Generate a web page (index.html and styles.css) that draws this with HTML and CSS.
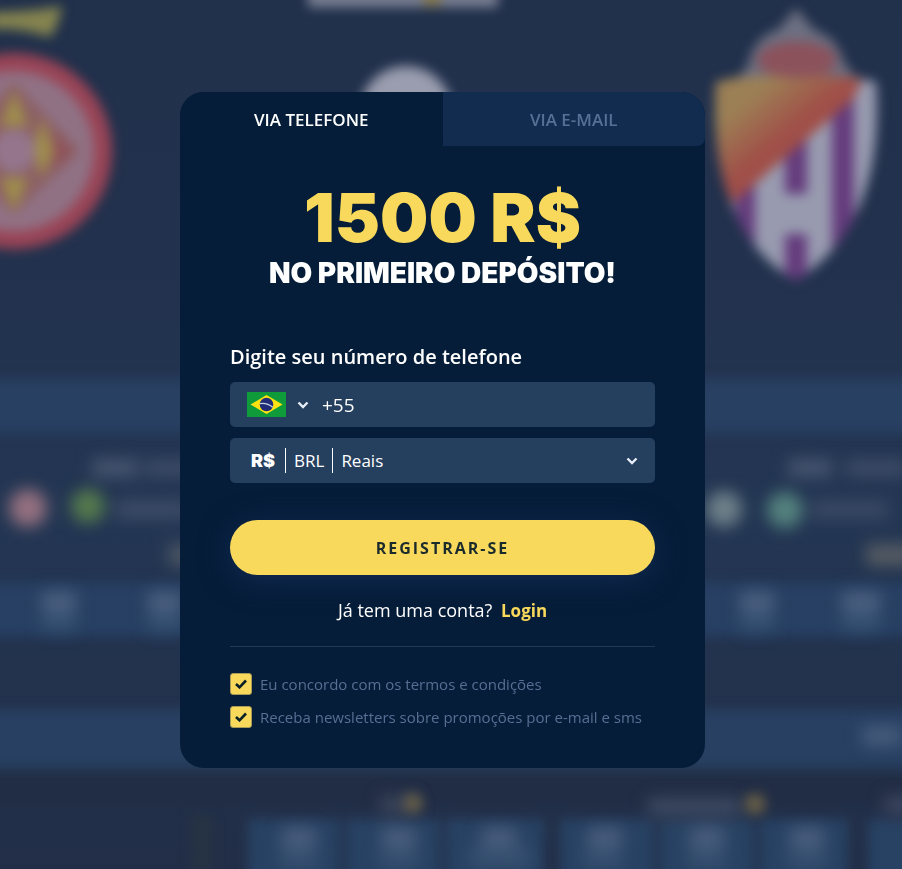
FILE: index.html
```html
<!DOCTYPE html>
<html lang="pt-BR">
<head>
    <meta charset="UTF-8">
    <meta name="viewport" content="width=device-width, initial-scale=1.0">
    <title>Registro</title>
    <link rel="stylesheet" href="styles.css">
</head>
<body>
    <svg class="backdrop" viewBox="0 0 902 869" preserveAspectRatio="xMidYMin slice" aria-hidden="true">
        <defs>
            <filter id="soft" x="-20%" y="-20%" width="140%" height="140%" color-interpolation-filters="sRGB">
                <feGaussianBlur stdDeviation="6"/>
            </filter>
            <filter id="softer" x="-50%" y="-50%" width="200%" height="200%" color-interpolation-filters="sRGB">
                <feGaussianBlur stdDeviation="8"/>
            </filter>
            <linearGradient id="sky" x1="0" y1="0" x2="0" y2="1">
                <stop offset="0" stop-color="#21304b"/>
                <stop offset="0.25" stop-color="#22314d"/>
                <stop offset="0.6" stop-color="#233653"/>
                <stop offset="1" stop-color="#222e47"/>
            </linearGradient>
            <linearGradient id="sun" x1="0" y1="0" x2="1" y2="1">
                <stop offset="0.25" stop-color="#9c8055"/>
                <stop offset="0.5" stop-color="#a04f48"/>
            </linearGradient>
            <clipPath id="shield">
                <path d="M716 82Q756 72 796 78Q836 72 876 82Q880 150 864 194Q846 248 796 281Q746 252 728 194Q712 150 716 82Z"/>
            </clipPath>
        </defs>
        <rect width="902" height="869" fill="url(#sky)"/>

        <!-- bars -->
        <g filter="url(#soft)">
            <rect x="-30" y="379" width="962" height="54" fill="#284062"/>
            <rect x="-30" y="582" width="962" height="54" fill="#274063"/>
            <rect x="-30" y="709" width="962" height="59" fill="#284062"/>
            <rect x="-30" y="775" width="962" height="30" fill="#212d45"/>
            <rect x="248" y="819" width="92" height="80" fill="#284263"/>
            <rect x="346" y="819" width="94" height="80" fill="#284263"/>
            <rect x="446" y="819" width="98" height="80" fill="#284263"/>
            <rect x="560" y="819" width="94" height="80" fill="#284263"/>
            <rect x="660" y="819" width="94" height="80" fill="#284263"/>
            <rect x="760" y="819" width="88" height="80" fill="#284263"/>
            <rect x="868" y="819" width="60" height="80" fill="#284263"/>
        </g>

        <!-- top logo, crown and round crest -->
        <g filter="url(#soft)">
            <path d="M308 -10h190v17H308z" fill="#7c8295"/>
            <path d="M424 -10h16v16h-16z" fill="#8a7b4a"/>
            <circle cx="406" cy="112" r="46" fill="#9a9daf"/>
            <path d="M-10 12Q28 12 62 6Q58 28 50 37Q20 27 -10 29Z" fill="#85844f"/>
            <circle cx="14" cy="151" r="98" fill="#9a4456"/>
            <circle cx="14" cy="151" r="80" fill="#907184"/>
            <path d="M14 82L80 151L14 214L-52 151Z" fill="#8b6063"/>
            <path d="M14 90l14 36h-28zM14 212l14-34h-28zM42 118l12 33-12 26-9-26z" fill="#9f8d4c"/>
            <path d="M54 132l18 19-18 19z" fill="#90515a"/>
            <circle cx="14" cy="151" r="22" fill="#94758c"/>
        </g>

        <!-- shield crest -->
        <g filter="url(#soft)">
            <path d="M716 86Q750 76 750 56Q760 34 778 30L796 8L814 30Q834 36 842 56Q846 74 874 86Z" fill="#6d7082"/>
            <ellipse cx="797" cy="60" rx="40" ry="19" fill="#8b525c"/>
            <g clip-path="url(#shield)">
                <rect x="710" y="66" width="176" height="220" fill="#989bb0"/>
                <path d="M736 70h19v216h-19zM785 70h22v124h-22zM785 234h22v50h-22zM832 70h22v216h-22z" fill="#643b7c"/>
                <path d="M706 66H868L854 98L734 202H706Z" fill="url(#sun)"/>
            </g>
        </g>

        <!-- match rows -->
        <g filter="url(#softer)">
            <circle cx="28" cy="508" r="19" fill="#94707f"/>
            <circle cx="88" cy="506" r="17" fill="#557a4d"/>
            <circle cx="724" cy="509" r="18" fill="#6e8089"/>
            <circle cx="785" cy="510" r="18" fill="#54827e"/>
            <rect x="92" y="459" width="46" height="18" fill="#475570"/>
            <rect x="145" y="460" width="50" height="16" fill="#3f4d69"/>
            <rect x="116" y="501" width="74" height="17" fill="#3f4d69"/>
            <rect x="788" y="459" width="44" height="18" fill="#475570"/>
            <rect x="846" y="460" width="60" height="16" fill="#3f4d69"/>
            <rect x="812" y="501" width="76" height="17" fill="#3c4a66"/>
            <rect x="168" y="544" width="30" height="22" fill="#4b5564"/>
            <rect x="866" y="544" width="50" height="22" fill="#555b63"/>
            <rect x="42" y="592" width="34" height="18" fill="#4d6080"/>
            <rect x="42" y="610" width="34" height="20" fill="#365273"/>
            <rect x="148" y="592" width="34" height="18" fill="#4d6080"/>
            <rect x="148" y="610" width="34" height="20" fill="#365273"/>
            <rect x="740" y="592" width="34" height="18" fill="#4d6080"/>
            <rect x="740" y="610" width="34" height="20" fill="#365273"/>
            <rect x="842" y="592" width="38" height="18" fill="#4d6080"/>
            <rect x="842" y="610" width="38" height="20" fill="#365273"/>
            <rect x="862" y="726" width="40" height="20" fill="#455c7c"/>
            <rect x="380" y="796" width="36" height="18" fill="#3b455a"/>
            <rect x="648" y="798" width="94" height="18" fill="#3d4a62"/>
            <rect x="884" y="796" width="30" height="18" fill="#3d4660"/>
            <rect x="282" y="828" width="34" height="18" fill="#4b5e7e"/>
            <rect x="280" y="846" width="38" height="22" fill="#375070"/>
            <rect x="382" y="828" width="34" height="18" fill="#4b5e7e"/>
            <rect x="380" y="846" width="38" height="22" fill="#375070"/>
            <rect x="482" y="828" width="34" height="18" fill="#4b5e7e"/>
            <rect x="470" y="846" width="60" height="22" fill="#375070"/>
            <rect x="588" y="828" width="34" height="18" fill="#4b5e7e"/>
            <rect x="584" y="846" width="38" height="22" fill="#375070"/>
            <rect x="690" y="828" width="34" height="18" fill="#4b5e7e"/>
            <rect x="688" y="846" width="38" height="22" fill="#375070"/>
            <rect x="790" y="828" width="34" height="18" fill="#4b5e7e"/>
            <rect x="788" y="846" width="38" height="22" fill="#375070"/>
        </g>
        <g filter="url(#soft)">
            <circle cx="413" cy="803" r="10" fill="#625b47"/>
            <circle cx="755" cy="804" r="11" fill="#625b47"/>
            <rect x="192" y="814" width="20" height="60" fill="#263343"/>
        </g>
    </svg>

    <main class="overlay">
        <div class="modal">
            <div class="tabs">
                <button type="button" class="tab active">VIA TELEFONE</button>
                <button type="button" class="tab">VIA E-MAIL</button>
            </div>

            <form id="registerForm" class="form">
                <h1 class="bonus">1500 R$</h1>
                <h2 class="bonus-text">NO PRIMEIRO DEPÓSITO!</h2>

                <label class="title" for="phone">Digite seu número de telefone</label>
                <div class="field">
                    <button type="button" class="country" aria-label="Brasil">
                        <svg class="flag" viewBox="0 0 39 25">
                            <rect width="39" height="25" fill="#109b3b"/>
                            <path d="M3.5 12.5L19.5 3L35.5 12.5L19.5 22Z" fill="#fee211"/>
                            <circle cx="19.5" cy="12.5" r="6.8" fill="#202c78"/>
                            <path d="M13 11.6Q20 10.5 25.7 15.3" fill="none" stroke="#c5d3dc" stroke-width="1.3"/>
                        </svg>
                        <svg class="chevron" viewBox="0 0 12 8">
                            <path d="M1.5 1.5L6 6L10.5 1.5"/>
                        </svg>
                    </button>
                    <input type="tel" id="phone" name="phone" class="phone" value="+55">
                </div>
                <div class="field">
                    <span class="symbol">R$</span>
                    <span class="code">BRL</span>
                    <select name="currency" class="currency" aria-label="Moeda">
                        <option>Reais</option>
                    </select>
                    <svg class="chevron" viewBox="0 0 12 8">
                        <path d="M1.5 1.5L6 6L10.5 1.5"/>
                    </svg>
                </div>

                <button type="submit" class="submit">REGISTRAR-SE</button>

                <p class="login">Já tem uma conta? <a href="#">Login</a></p>

                <div class="agreements">
                    <label class="check">
                        <input type="checkbox" name="terms" checked>
                        <svg class="tick" viewBox="0 0 12 10"><path d="M1 5L4.5 8.3L11 1.5"/></svg>
                        <span>Eu concordo com os termos e condições</span>
                    </label>
                    <label class="check">
                        <input type="checkbox" name="news" checked>
                        <svg class="tick" viewBox="0 0 12 10"><path d="M1 5L4.5 8.3L11 1.5"/></svg>
                        <span>Receba newsletters sobre promoções por e-mail e sms</span>
                    </label>
                </div>
            </form>
        </div>
    </main>
</body>
</html>
```

FILE: styles.css
```css
:root {
    --dark: #051d38;
    --tab: #122c50;
    --field: #253f5f;
    --yellow: #f8d95b;
    --muted: #576f94;
}

* {
    box-sizing: border-box;
}

body {
    margin: 0;
    font-family: "Open Sans", "Noto Sans", sans-serif;
    background: #222f49;
    color: white;
}

.backdrop {
    position: fixed;
    top: 0;
    left: 0;
    width: 100%;
    height: 100%;
}

.overlay {
    position: relative;
    display: flex;
    justify-content: center;
    align-items: flex-start;
    min-height: 100vh;
    padding: 92px 17px 92px 0;
}

.modal {
    width: 100%;
    max-width: 525px;
    background: var(--dark);
    border-radius: 24px;
    overflow: hidden;
}

.tabs {
    display: flex;
}

.tab {
    flex: 1;
    height: 54px;
    padding: 0;
    border: none;
    border-radius: 0 0 8px 0;
    background: var(--tab);
    color: var(--muted);
    font: 600 17px "Open Sans", sans-serif;
    cursor: pointer;
}

.tab.active {
    background: var(--dark);
    color: white;
}

.form {
    display: flex;
    flex-direction: column;
    padding: 35px 50px 40px;
}

.bonus {
    margin: 0;
    text-align: center;
    color: var(--yellow);
    font: 900 68px/72px Inter, sans-serif;
}

.bonus-text {
    margin: 0;
    text-align: center;
    white-space: nowrap;
    font: 900 28px/40px Inter, sans-serif;
}

.title {
    margin: 50px 0 11px;
    font-size: 20px;
    font-weight: 600;
    line-height: 28px;
}

.field {
    display: flex;
    align-items: center;
    height: 45px;
    margin-bottom: 11px;
    padding: 0 17px;
    background: var(--field);
    border-radius: 5px;
    font-size: 17px;
}

.country {
    display: flex;
    align-items: center;
    gap: 11px;
    padding: 0;
    border: none;
    background: none;
    cursor: pointer;
}

.flag {
    width: 39px;
    height: 25px;
}

.chevron {
    width: 12px;
    height: 8px;
    fill: none;
    stroke: #e8eef5;
    stroke-width: 2.4;
}

.phone {
    flex: 1;
    min-width: 0;
    margin-left: 13px;
    padding: 0;
    border: none;
    outline: none;
    background: none;
    color: white;
    font: 19px "Open Sans", sans-serif;
}

.symbol {
    padding: 0 10px 0 4px;
    font: 900 18px Inter, sans-serif;
}

.code {
    padding: 0 8px;
    border: solid white;
    border-width: 0 1px;
    line-height: 25px;
}

.currency {
    flex: 1;
    padding: 0 8px;
    border: none;
    appearance: none;
    background: none;
    color: white;
    font: 17px/25px "Open Sans", sans-serif;
}

.submit {
    height: 55px;
    margin-top: 26px;
    border: none;
    border-radius: 28px;
    background: var(--yellow);
    box-shadow: 0 5px 30px #132a53;
    color: #1b2b2c;
    font: 700 16px "Open Sans", sans-serif;
    letter-spacing: 2px;
    cursor: pointer;
}

.login {
    margin: 22px 0;
    text-align: center;
    font-size: 18px;
    line-height: 27px;
}

.login a {
    margin-left: 4px;
    color: var(--yellow);
    font-size: 17px;
    font-weight: 700;
    text-decoration: none;
}

.agreements {
    display: flex;
    flex-direction: column;
    gap: 11px;
    padding-top: 26px;
    border-top: 1px solid #213955;
}

.check {
    display: grid;
    grid-template-columns: 22px 1fr;
    align-items: center;
    column-gap: 8px;
    color: var(--muted);
    font-size: 15px;
    line-height: 22px;
}

.check input {
    grid-area: 1 / 1;
    width: 22px;
    height: 22px;
    margin: 0;
    appearance: none;
    border: 1px solid #a99a57;
    border-radius: 3px;
}

.check input:checked {
    background: var(--yellow);
}

.tick {
    grid-area: 1 / 1;
    justify-self: center;
    width: 12px;
    height: 10px;
    fill: none;
    stroke: #0b2026;
    stroke-width: 2.6;
    pointer-events: none;
}
```
